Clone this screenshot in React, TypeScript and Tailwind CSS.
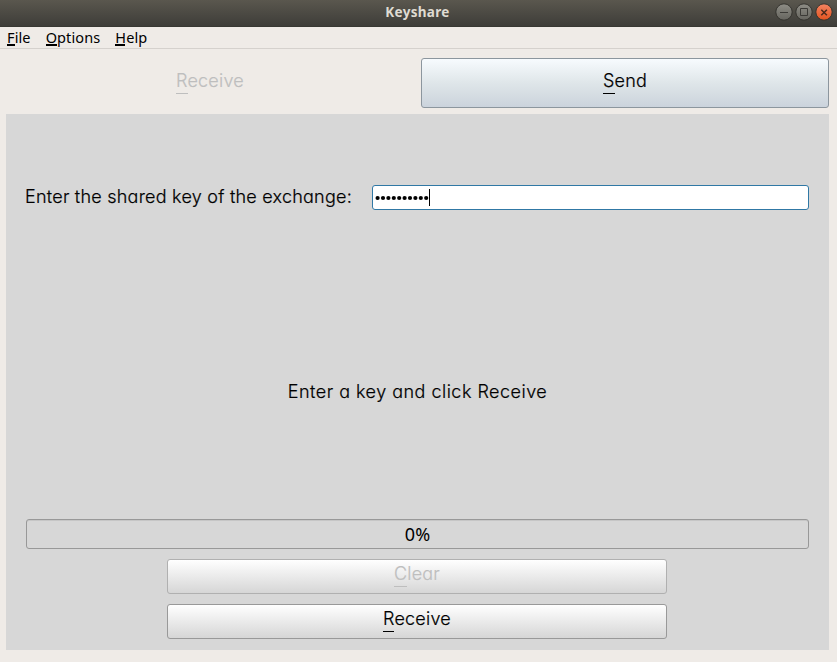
import React from "react";

function Mnemonic({ text, line, color = "bg-black" }: { text: string; line: string; color?: string }) {
  return (
    <span className="relative whitespace-nowrap">
      {text}
      <span className={`absolute left-0 h-px ${line} ${color}`} />
    </span>
  );
}

function MenuItem({ text, line }: { text: string; line: string }) {
  return (
    <span className="relative leading-[20px]">
      {text}
      <span className={`absolute left-0 top-[17px] h-[2px] bg-black ${line}`} />
    </span>
  );
}

function WindowButton({ kind }: { kind: "min" | "max" | "close" }) {
  const close = kind === "close";
  return (
    <svg width="18" height="18" viewBox="0 0 18 18">
      <defs>
        <linearGradient id={`g-${kind}`} x1="0" y1="0" x2="0" y2="1">
          <stop offset="0" stopColor={close ? "#f58462" : "#8e8d86"} />
          <stop offset="1" stopColor={close ? "#e2531f" : "#65645e"} />
        </linearGradient>
      </defs>
      <circle cx="9" cy="9" r="8.2" fill={`url(#g-${kind})`} stroke="#34332e" strokeWidth="1" />
      <g fill="none" stroke={close ? "#4b2a1c" : "#3c3b37"}>
        {kind === "min" && <path d="M5 9.5h8" />}
        {kind === "max" && <path d="M5.5 5.5h7v7h-7z" />}
        {close && <path d="M6.3 6.7l5.6 5.6M11.9 6.7l-5.6 5.6" strokeWidth="1.5" />}
      </g>
    </svg>
  );
}

export default function App() {
  return (
    <div className="flex h-[662px] w-[837px] flex-col overflow-hidden bg-[#efebe7] font-['Inter',sans-serif] text-[18px] font-light tracking-[0.2px] text-black [font-feature-settings:'cv11']">
      <header className="grid h-[27px] shrink-0 grid-cols-[1fr_auto_1fr] border-b border-[#383833] bg-linear-to-b from-[#5a574e] to-[#3e3d39] font-['Noto_Sans',sans-serif]">
        <span />
        <h1 className="-ml-[2px] text-[13.5px] leading-[24px] font-bold tracking-[0.3px] text-[#dfdbd2]">Keyshare</h1>
        <div className="flex justify-end gap-[2px] pt-[3px] pr-1">
          <WindowButton kind="min" />
          <WindowButton kind="max" />
          <WindowButton kind="close" />
        </div>
      </header>
      <nav className="flex h-[22px] shrink-0 gap-[15px] border-b border-[#d5d1cd] pl-[7px] font-['Noto_Sans',sans-serif] text-[14.5px] font-normal tracking-[0.11px]">
        <MenuItem text="File" line="w-2" />
        <MenuItem text="Options" line="w-[11px]" />
        <MenuItem text="Help" line="w-[10px]" />
      </nav>
      <div className="flex h-[65px] shrink-0 pt-[9px] pr-2 pl-[6px] [-webkit-text-stroke:0.2px]">
        <div className="flex h-[50px] w-[415px] justify-center pr-[7px] leading-[46px] text-[#bebebe]">
          <Mnemonic text="Receive" line="top-[35px] w-3" color="bg-[#bebebe]" />
        </div>
        <button className="flex h-[50px] flex-1 justify-center rounded-[3px] border border-[#8c969e] bg-linear-to-b from-[#f7fbfe] via-[#dfe6e9] to-[#cbd3dc] leading-[44px]">
          <Mnemonic text="Send" line="top-[34px] w-3" />
        </button>
      </div>
      <main className="mx-[6px] mr-2 flex h-[536px] flex-col bg-[#d7d7d7] px-5 pt-[71px] [-webkit-text-stroke:0.2px]">
        <div className="flex h-[25px] shrink-0">
          <label className="-ml-px w-[347px] leading-[23px] tracking-[0.23px] whitespace-nowrap">Enter the shared key of the exchange:</label>
          <div className="flex flex-1 items-center rounded-[3px] border border-[#3078a5] bg-white pl-[2px]">
            <svg width="54" height="6" viewBox="0 0 54 6" className="mt-px">
              {Array.from({ length: 10 }, (_, i) => (
                <circle key={i} cx={2.6 + i * 5.4} cy="3" r="2.1" />
              ))}
            </svg>
            <span className="h-[17px] w-px bg-black" />
          </div>
        </div>
        <p className="mt-[168px] h-[28px] shrink-0 text-center leading-[28px] tracking-[0.48px]">Enter a key and click Receive</p>
        <div className="mt-[113px] h-[30px] shrink-0 rounded-[3px] border border-[#989898] text-center font-['Noto_Sans',sans-serif] text-[18px] font-normal leading-[29px] shadow-[inset_0_1px_0_#c6c6c6] [-webkit-text-stroke:0px]">0%</div>
        <button className="ml-[141px] mt-[10px] flex h-[35px] w-[500px] shrink-0 justify-center rounded-[3px] border border-[#b0b0b0] bg-linear-to-b from-white to-[#d6d6d6] leading-[28px] text-[#bebebe]">
          <Mnemonic text="Clear" line="top-[26px] w-[13px]" color="bg-[#bebebe]" />
        </button>
        <button className="ml-[141px] mt-[10px] flex h-[35px] w-[500px] shrink-0 justify-center rounded-[3px] border border-[#999] bg-linear-to-b from-white to-[#d6d6d6] leading-[28px]">
          <Mnemonic text="Receive" line="top-[26px] w-[11px]" />
        </button>
      </main>
    </div>
  );
}
